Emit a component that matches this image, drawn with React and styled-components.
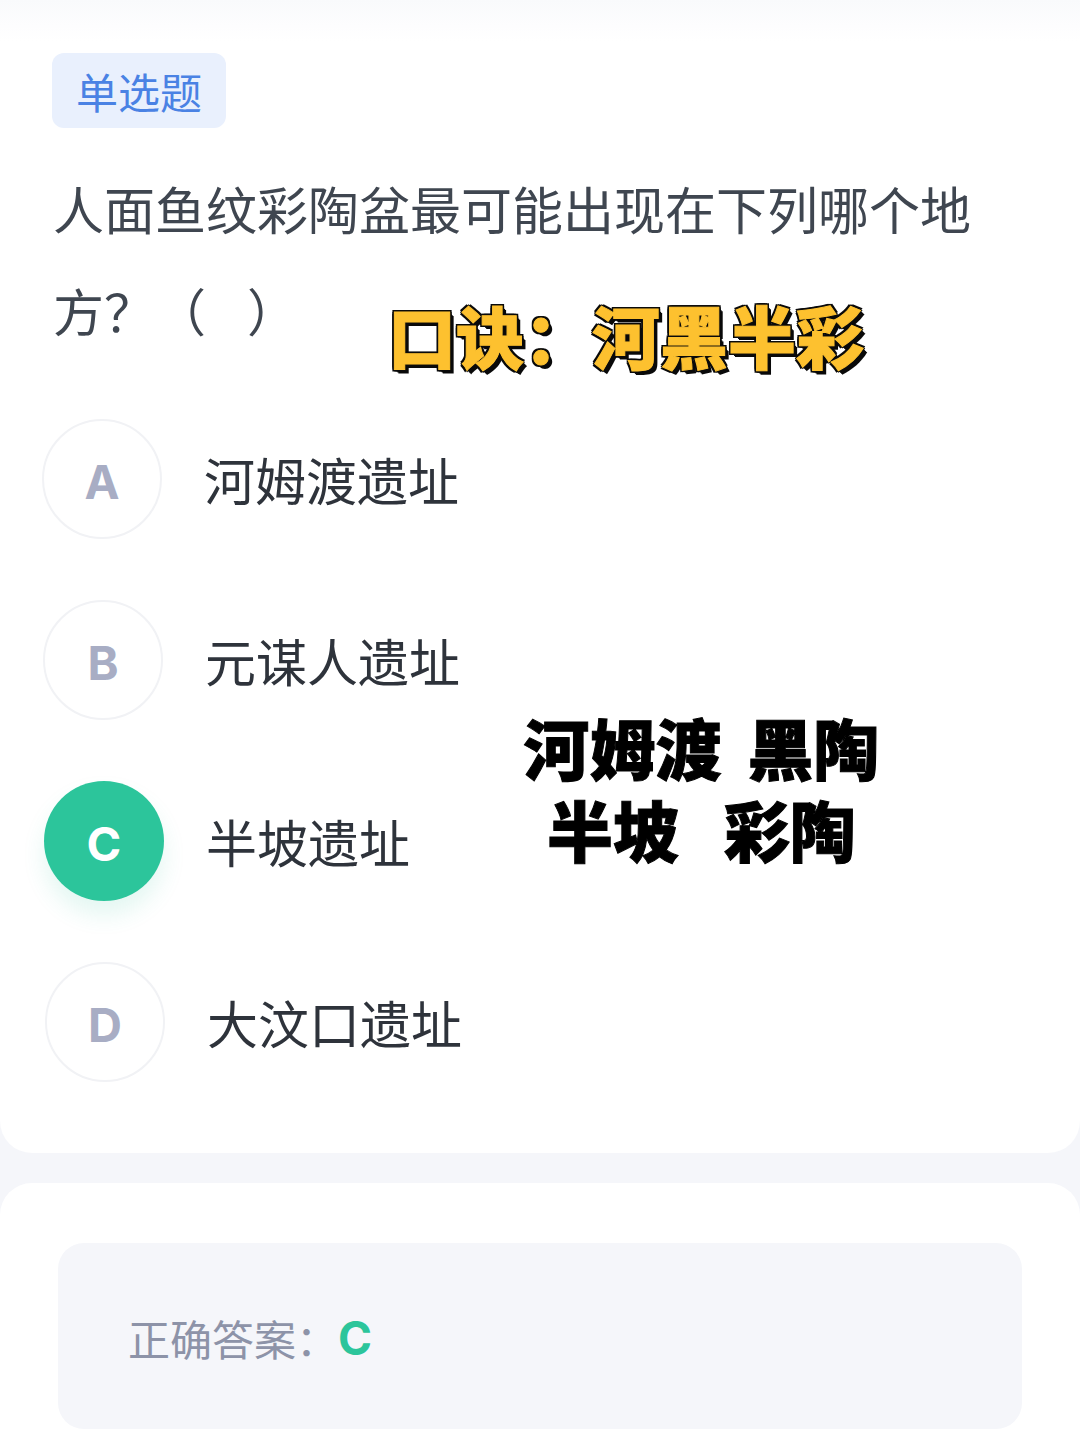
import styled, { createGlobalStyle } from 'styled-components';

const Global = createGlobalStyle`
  html, body {
    margin: 0;
    padding: 0;
    background: #f5f6fa;
  }
  body {
    font-family: "Noto Sans CJK SC", "Noto Sans", sans-serif;
  }
`;

const Page = styled.div`
  position: relative;
  width: 1080px;
  height: 1440px;
  overflow: hidden;
  background: #f5f6fa;
  display: flex;
  flex-direction: column;
  gap: 30px;
`;

const QuestionCard = styled.section`
  height: 1153px;
  flex: none;
  box-sizing: border-box;
  padding: 53px 0 0 52px;
  background: linear-gradient(#f9fafc 0, #fdfdfe 26px, #fff 42px);
  border-radius: 0 0 32px 32px;
`;

const Tag = styled.div`
  width: 174px;
  height: 75px;
  display: flex;
  align-items: center;
  justify-content: center;
  border-radius: 12px;
  background: #e9f0fd;
  color: #4a82e4;
  font-size: 42px;
  line-height: 1;
`;

const Question = styled.h1`
  margin: 29px 0 0 1px;
  width: 930px;
  font-size: 51px;
  line-height: 102px;
  font-weight: 400;
  color: #3f4650;
`;

const Blank = styled.span`
  display: inline-block;
  width: 41px;
`;

const Options = styled.ul`
  list-style: none;
  margin: 58px 0 0 -10px;
  padding: 0;
  display: flex;
  flex-direction: column;
  gap: 61px;
`;

const Option = styled.li`
  display: flex;
  align-items: center;
  gap: 42px;
  height: 120px;
  padding-left: ${(p) => p.$indent}px;
`;

const Bullet = styled.span`
  width: 120px;
  height: 120px;
  flex: none;
  box-sizing: border-box;
  border-radius: 50%;
  display: flex;
  align-items: center;
  justify-content: center;
  font-family: Inter, "Noto Sans", sans-serif;
  font-size: 47px;
  font-weight: 700;
  padding-top: 4px;
  border: ${(p) => (p.$active ? 'none' : '2px solid #f1f2f5')};
  color: ${(p) => (p.$active ? '#fff' : '#a8adc4')};
  background: ${(p) => (p.$active ? '#2cc59b' : '#fff')};
  box-shadow: ${(p) => (p.$active ? '0 14px 22px rgba(44, 197, 155, 0.13)' : 'none')};
`;

const OptionText = styled.span`
  font-size: 51px;
  line-height: 1;
  color: #2e333b;
`;

const AnswerCard = styled.section`
  flex: 1;
  box-sizing: border-box;
  padding: 60px 58px 0;
  background: #fff;
  border-radius: 32px 32px 0 0;
`;

const AnswerBox = styled.div`
  height: 186px;
  display: flex;
  align-items: center;
  padding: 3px 0 0 70px;
  box-sizing: border-box;
  border-radius: 26px;
  background: #f5f6fa;
`;

const AnswerLabel = styled.span`
  font-size: 42px;
  color: #8d93a8;
`;

const AnswerValue = styled.span`
  font-family: Inter, "Noto Sans", sans-serif;
  font-size: 46px;
  font-weight: 700;
  padding-top: 1px;
  color: #2cc59b;
`;

const Mnemonic = styled.div`
  position: absolute;
  left: 388px;
  top: 285px;
  font-size: 68px;
  line-height: 100px;
  font-weight: 900;
  white-space: nowrap;
  color: #fdc12f;
  -webkit-text-stroke: 1px #fdc12f;
  text-shadow:
    -2px -2px 0 #0a0a0a,
    2px -2px 0 #0a0a0a,
    -2px 2px 0 #0a0a0a,
    2px 2px 0 #0a0a0a,
    -2px 0 0 #0a0a0a,
    2px 0 0 #0a0a0a,
    0 -2px 0 #0a0a0a,
    0 2px 0 #0a0a0a,
    3px 3px 0 #0a0a0a,
    4px 4px 0 #0a0a0a;
`;

const Caption = styled.div`
  position: absolute;
  left: 500px;
  top: 705px;
  width: 403px;
  display: flex;
  flex-direction: column;
  align-items: center;
  font-size: 66px;
  line-height: 82px;
  font-weight: 900;
  color: #000;
  -webkit-text-stroke: 1px #000;
`;

const CaptionLine = styled.div`
  display: flex;
  gap: ${(p) => p.$gap}px;
`;

const options = [
  { key: 'A', text: '河姆渡遗址', indent: 0 },
  { key: 'B', text: '元谋人遗址', indent: 1 },
  { key: 'C', text: '半坡遗址', indent: 2, active: true },
  { key: 'D', text: '大汶口遗址', indent: 3 },
];

export default function App() {
  return (
    <Page>
      <Global />
      <QuestionCard>
        <Tag>单选题</Tag>
        <Question>人面鱼纹彩陶盆最可能出现在下列哪个地方？（<Blank />）</Question>
        <Options>
          {options.map((o) => (
            <Option key={o.key} $indent={o.indent}>
              <Bullet $active={o.active}>{o.key}</Bullet>
              <OptionText>{o.text}</OptionText>
            </Option>
          ))}
        </Options>
      </QuestionCard>
      <AnswerCard>
        <AnswerBox>
          <AnswerLabel>正确答案：</AnswerLabel>
          <AnswerValue>C</AnswerValue>
        </AnswerBox>
      </AnswerCard>
      <Mnemonic>口诀：河黑半彩</Mnemonic>
      <Caption>
        <CaptionLine $gap={26}>
          <span>河姆渡</span>
          <span>黑陶</span>
        </CaptionLine>
        <CaptionLine $gap={45}>
          <span>半坡</span>
          <span>彩陶</span>
        </CaptionLine>
      </Caption>
    </Page>
  );
}
